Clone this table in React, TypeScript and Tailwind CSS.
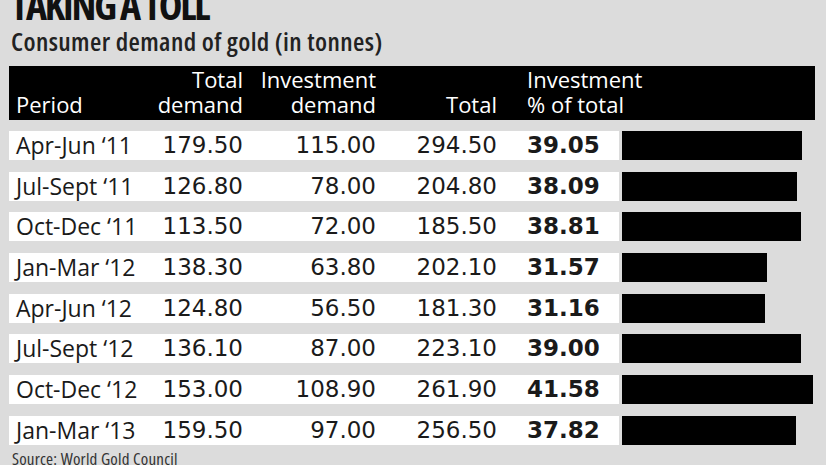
const rows = [
  { period: "Apr-Jun \u201811", total: "179.50", inv: "115.00", sum: "294.50", pct: 39.05 },
  { period: "Jul-Sept \u201811", total: "126.80", inv: "78.00", sum: "204.80", pct: 38.09 },
  { period: "Oct-Dec \u201811", total: "113.50", inv: "72.00", sum: "185.50", pct: 38.81 },
  { period: "Jan-Mar \u201812", total: "138.30", inv: "63.80", sum: "202.10", pct: 31.57 },
  { period: "Apr-Jun \u201812", total: "124.80", inv: "56.50", sum: "181.30", pct: 31.16 },
  { period: "Jul-Sept \u201812", total: "136.10", inv: "87.00", sum: "223.10", pct: 39.0 },
  { period: "Oct-Dec \u201812", total: "153.00", inv: "108.90", sum: "261.90", pct: 41.58 },
  { period: "Jan-Mar \u201813", total: "159.50", inv: "97.00", sum: "256.50", pct: 37.82 },
];

const cols = "grid grid-cols-[141px_93px_133px_121px_122px]";

export default function App() {
  return (
    <div className="w-[826px] h-[465px] overflow-hidden bg-[#dcdcdc] text-[#1a1a1a] font-['DejaVu_Sans',sans-serif]">
      {/* Title */}
      <div className="pl-[11px] mt-[-15px] font-['Open_Sans',sans-serif] font-stretch-75% text-[40px] font-bold leading-[40px] tracking-[-2.2px] text-[#111]">
        TAKING A TOLL
      </div>
      <div className="pl-[11px] mt-[3px] font-['Open_Sans',sans-serif] font-stretch-75% text-[26px] font-semibold leading-[27px] tracking-[0.4px] text-[#222]">
        Consumer demand of gold (in tonnes)
      </div>

      <div className="mx-[9px] mt-[11px]">
        {/* Header */}
        <div className={`${cols} h-[54px] w-[806px] bg-black text-white text-[22px] leading-[25px] items-end pb-[3px] font-['Open_Sans',sans-serif]`}>
          <div className="pl-[7px]">Period</div>
          <div className="text-right">
            Total
            <br />
            demand
          </div>
          <div className="text-right">
            Investment
            <br />
            demand
          </div>
          <div className="text-right">Total</div>
          <div className="pl-[30px] whitespace-nowrap">
            Investment
            <br />% of total
          </div>
        </div>

        {/* Rows */}
        <div className="mt-[11px] flex flex-col gap-[11.7px]">
          {rows.map((r) => (
            <div key={r.period} className="flex items-stretch h-[29px]">
              <div className={`${cols} bg-white items-center text-[23px] leading-none`}>
                <div className="pl-[7px] text-[23px] whitespace-nowrap font-['Open_Sans',sans-serif]">{r.period}</div>
                <div className="text-right">{r.total}</div>
                <div className="text-right">{r.inv}</div>
                <div className="text-right">{r.sum}</div>
                <div className="pl-[30px] font-bold">{r.pct.toFixed(2)}</div>
              </div>
              <div className="ml-[3px] bg-black" style={{ width: Math.round(r.pct * 4.6) }} />
            </div>
          ))}
        </div>

        <div className="mt-[5px] pl-[3px] text-[17px] leading-[18px] tracking-[0.2px] text-[#333] font-['Open_Sans',sans-serif] font-stretch-75%">
          Source: World Gold Council
        </div>
      </div>
    </div>
  );
}
